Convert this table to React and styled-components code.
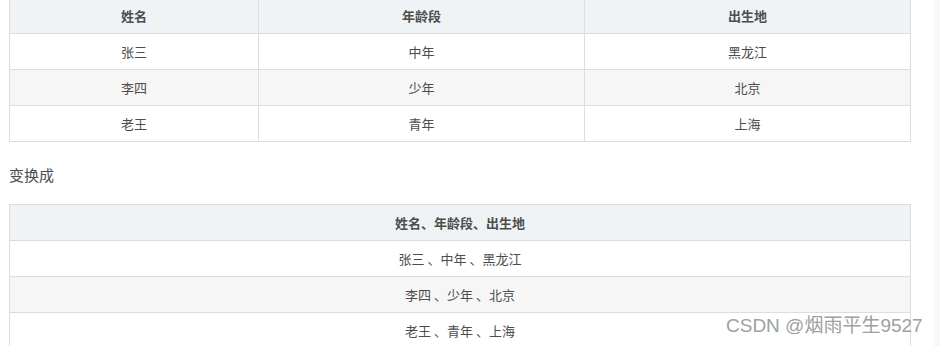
import styled, { createGlobalStyle } from "styled-components"

const GlobalStyle = createGlobalStyle`
    html, body {
        margin: 0;
        padding: 0;
        background: #ffffff;
        overflow: hidden;
    }
    body {
        font-family: "Noto Sans CJK SC", "Liberation Sans", sans-serif;
        color: #4d4d4d;
    }
`

const original = [
    ["张三", "中年", "黑龙江"],
    ["李四", "少年", "北京"],
    ["老王", "青年", "上海"],
]

export default function App() {
    return (
        <Page>
            <GlobalStyle />
            <Content>
                <Table>
                    <colgroup>
                        <col style={{ width: 249 }} />
                        <col style={{ width: 326 }} />
                        <col style={{ width: 326 }} />
                    </colgroup>
                    <thead>
                        <tr>
                            <Th>姓名</Th>
                            <Th>年龄段</Th>
                            <Th>出生地</Th>
                        </tr>
                    </thead>
                    <tbody>
                        {original.map((row, i) => (
                            <Tr key={i} even={i % 2 === 1}>
                                {row.map(cell => <Td key={cell}>{cell}</Td>)}
                            </Tr>
                        ))}
                    </tbody>
                </Table>
                <Paragraph>变换成</Paragraph>
                <Table>
                    <thead>
                        <tr>
                            <Th>姓名、年龄段、出生地</Th>
                        </tr>
                    </thead>
                    <tbody>
                        {original.map((row, i) => (
                            <Tr key={i} even={i % 2 === 1}>
                                <Td>{row.join(" 、")}</Td>
                            </Tr>
                        ))}
                    </tbody>
                </Table>
            </Content>
            <Scrollbar />
            <Watermark>CSDN @烟雨平生9527</Watermark>
        </Page>
    )
}

const Page = styled.div`
    position: relative;
    width: 940px;
    height: 346px;
    display: flex;
    overflow: hidden;
`

const Content = styled.div`
    width: 934px;
    box-sizing: border-box;
    padding-left: 9px;
    margin-top: -3px;
`

const Scrollbar = styled.div`
    width: 6px;
    background: #f7f8fa;
`

const Table = styled.table`
    width: 902px;
    border-collapse: collapse;
    table-layout: fixed;
    font-size: 13px;
`

const Th = styled.th`
    height: 35px;
    padding: 0 8px;
    background: #eff3f5;
    border: 1px solid #dddddd;
    font-weight: 700;
    color: #4d4d4d;
    text-align: center;
`

const Tr = styled.tr`
    background: ${props => props.even ? "#f6f6f6" : "#ffffff"};
`

const Td = styled.td`
    height: 35px;
    padding: 0 8px;
    border: 1px solid #dddddd;
    text-align: center;
    color: #4d4d4d;
`

const Paragraph = styled.p`
    margin: 22px 0 18px;
    font-size: 15px;
    line-height: 22px;
    color: #4d4d4d;
`

const Watermark = styled.div`
    position: absolute;
    left: 726px;
    top: 314px;
    font-family: "Liberation Sans", "Noto Sans CJK SC", sans-serif;
    font-size: 19px;
    line-height: 24px;
    color: #a0a0a0;
    white-space: nowrap;
`
